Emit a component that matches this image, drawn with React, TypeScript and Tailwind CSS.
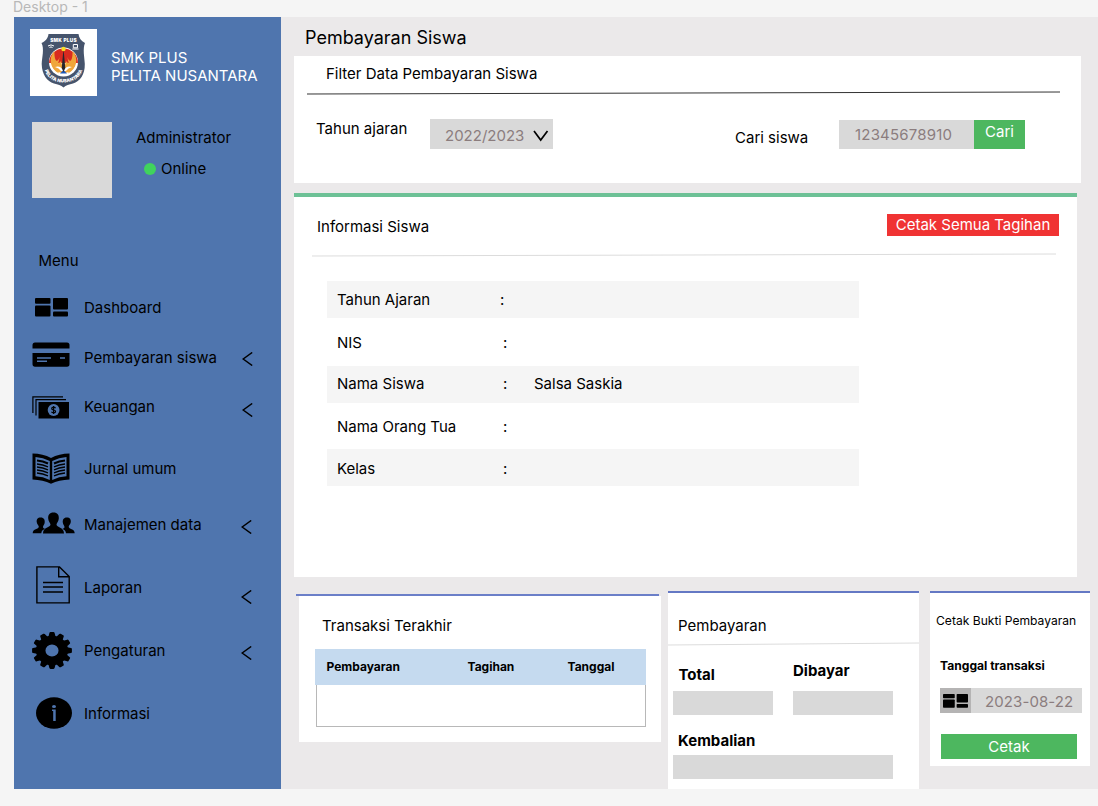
import type { ReactNode } from "react";

function Text({ className = "", children }: { className?: string; children: ReactNode }) {
  return <span className={`block shrink-0 whitespace-nowrap ${className}`}>{children}</span>;
}

function SchoolLogo() {
  return (
    <svg width="67" height="67" viewBox="0 0 67 67" className="shrink-0 bg-white">
      <path
        d="M18.500 5 H48.500 C49 9 51 12 55 14 C52.500 20 54.500 28 54.800 35 C55 46 50 52 43 54.500 C39 55.500 36 56 33.500 58.500 C31 56 28 55.500 24 54.500 C17 52 12 46 11.700 35 C12 28 14.500 20 11.500 14 C16 12 18 9 18.500 5 Z"
        fill="#46546c"
      />
      <circle cx="33.500" cy="33" r="14.500" fill="#fff" />
      <path d="M19 34 A14.500 14.500 0 0 1 48 34 Z" fill="#d92b20" />
      <path
        d="M24.500 22 C18 29 20 40 29 44.500 C25.500 38 29 34 29.500 28 C27.500 35 24 32 24.500 22 Z M42.500 22 C49 29 47 40 38 44.500 C41.500 38 38 34 37.500 28 C39.500 35 43 32 42.500 22 Z"
        fill="#f0a63a"
      />
      <path d="M22 31 C25 36 29 35 31 32 L33.500 42 L36 32 C38 35 42 36 45 31 C46 39 41 44 33.500 44 C26 44 21 39 22 31 Z" fill="#f0a63a" />
      <path d="M25 38 Q30 36 33.500 41 Q37 36 42 38 Q38 39 36 42 H31 Q29 39 25 38 Z" fill="#fff" />
      <path d="M30 44.500 L33.500 41 L37 44.500 Z" fill="#1d58b8" />
      <path d="M33.500 20 L35.300 39 L33.500 43 L31.700 39 Z" fill="#29262c" />
      <circle cx="33.500" cy="20" r="2.200" fill="#f7df25" />
      <g fill="none" stroke="#fff" strokeWidth="1">
        <path d="M18 17 Q21 14.800 24 17 M19.500 18.500 Q21 17.300 22.500 18.500" />
        <path d="M43.300 15.500 h4.200 v3.300 h-4.200 z M42.300 20 h6.200" />
      </g>
      <text x="33.500" y="13" textAnchor="middle" fill="#fff" fontSize="4.700" fontWeight="900" letterSpacing="0.300" fontFamily="Inter, sans-serif">
        SMK PLUS
      </text>
      <path id="motto" d="M14.500 40 C18 58 49 58 52.500 40" fill="none" />
      <text fill="#fff" fontSize="4.700" fontWeight="900" fontFamily="Inter, sans-serif">
        <textPath href="#motto" startOffset="50%" textAnchor="middle">
          PELITA NUSANTARA
        </textPath>
      </text>
    </svg>
  );
}

function DashboardIcon({ className = "" }: { className?: string }) {
  return (
    <svg viewBox="0 0 33 19" preserveAspectRatio="none" className={`shrink-0 ${className}`}>
      <rect x="0" y="0" width="15.500" height="5.700" rx="1" />
      <rect x="0" y="7.500" width="15.500" height="11" rx="1" />
      <rect x="18" y="0" width="15" height="11.500" rx="1" />
      <rect x="18" y="13.500" width="15" height="5" rx="1" />
    </svg>
  );
}

function CardIcon() {
  return (
    <svg width="38" height="25" viewBox="0 0 38 25" className="mt-[7px]">
      <path d="M3 0.500 H35 Q37.500 0.500 37.500 3 V6.500 H0.500 V3 Q0.500 0.500 3 0.500 Z" />
      <path d="M0.500 11 H37.500 V22 Q37.500 24.700 35 24.700 H3 Q0.500 24.700 0.500 22 Z" />
      <path d="M5 16 H19 M5 19.300 H15 M28 16 H33" stroke="#4f75ae" strokeWidth="1.400" />
    </svg>
  );
}

function MoneyIcon() {
  return (
    <svg width="38" height="23" viewBox="0 0 38 23" className="mt-[11px]">
      <path d="M0.900 17 V0.900 H31 M4 19.500 V3.700 H34" fill="none" stroke="#000" strokeWidth="1.200" />
      <rect x="6.500" y="6" width="30.500" height="16.500" />
      <circle cx="21.600" cy="14" r="5.900" fill="#4f75ae" />
      <path
        d="M23.500 12.200 Q23 11.200 21.600 11.200 Q19.700 11.200 19.700 12.500 Q19.700 13.700 21.600 14 Q23.600 14.300 23.600 15.600 Q23.600 16.900 21.600 16.900 Q20 16.900 19.500 15.800 M21.600 10 V18"
        fill="none"
        stroke="#000"
        strokeWidth="1.200"
      />
    </svg>
  );
}

function BookIcon() {
  return (
    <svg width="38" height="31" viewBox="0 0 38 31" className="mt-[8px]">
      <path d="M0.500 0.500 Q11 0.500 19 5 Q27 0.500 37.500 0.500 V26.500 Q27 27 19 30.800 Q11 27 0.500 26.500 Z" />
      <path d="M3.500 4 Q11 4.500 17.800 8 V27 Q11 23.500 3.500 23.300 Z M34.500 4 Q27 4.500 20.200 8 V27 Q27 23.500 34.500 23.300 Z" fill="#4f75ae" />
      <path d="M5 7.500 Q11 8 16 10.500 M33 7.500 Q27 8 22 10.500" fill="none" stroke="#000" strokeWidth="2" />
      <path
        d="M5 11 Q11 11.500 16 13.800 M5 14 Q11 14.500 16 16.800 M5 17 Q11 17.500 16 19.800 M5 20 Q11 20.500 16 22.800 M33 11 Q27 11.500 22 13.800 M33 14 Q27 14.500 22 16.800 M33 17 Q27 17.500 22 19.800 M33 20 Q27 20.500 22 22.800"
        fill="none"
        stroke="#000"
        strokeWidth="1.400"
      />
    </svg>
  );
}

function PeopleIcon() {
  return (
    <svg width="43" height="22" viewBox="0 0 43 22" className="mt-[12px]">
      <path d="M21.500 0.500 C25.500 0.500 27 3 26.800 6.500 C26.600 9.500 24.800 11 24.500 12.500 C24.500 15.500 32 15 32 21.500 H11 C11 15 18.500 15.500 18.500 12.500 C18.200 11 16.400 9.500 16.200 6.500 C16 3 17.500 0.500 21.500 0.500 Z" />
      <path d="M8.700 5.500 C12 5.500 13 8 12.700 10.500 C12.500 12.600 11 13.500 11 15 C11 16 12 16.500 13 16.800 C10.500 18 9.500 19 9.300 21.200 H0.700 C0.700 16.500 6.800 17.500 6.800 14.800 C6.800 13.500 4.900 12.500 4.700 10 C4.500 7.500 5.500 5.500 8.700 5.500 Z" />
      <path d="M34.800 5.500 C31.500 5.500 30.500 8 30.800 10.500 C31 12.600 32.500 13.500 32.500 15 C32.500 16 31.500 16.500 30.500 16.800 C32.500 18 33.800 19 34 21.200 H42.700 C42.700 16.500 36.700 17.500 36.700 14.800 C36.700 13.500 38.600 12.500 38.800 10 C39 7.500 38 5.500 34.800 5.500 Z" />
    </svg>
  );
}

function DocumentIcon() {
  return (
    <svg width="35" height="38" viewBox="0 0 35 38" className="ml-[4px] mt-[8px]" fill="none" stroke="#000" strokeWidth="1.400">
      <path d="M0.900 0.900 H23.500 L33.200 10.500 V36.900 H0.900 Z M22.700 0.900 V10.800 H33.200" />
      <path d="M7 16.500 H27 M7 21 H27 M7 26 H27" />
    </svg>
  );
}

const teeth = [0, 30, 60, 90, 120, 150, 180, 210, 240, 270, 300, 330];

function GearIcon() {
  return (
    <svg width="40" height="37" viewBox="-20 -20 40 40" preserveAspectRatio="none" className="mt-[8px]">
      <circle r="11.300" fill="none" stroke="#000" strokeWidth="9.500" />
      {teeth.map((angle) => (
        <path key={angle} d="M-3.800 -14 L-2.600 -19 Q-2.400 -19.900 -1.500 -19.900 H1.500 Q2.400 -19.900 2.600 -19 L3.800 -14 Z" transform={`rotate(${angle})`} />
      ))}
    </svg>
  );
}

function InfoIcon() {
  return (
    <svg width="36" height="32" viewBox="0 0 36 32" className="ml-[4px] mt-[11px]">
      <ellipse cx="18" cy="16" rx="18" ry="15.800" />
      <ellipse cx="18" cy="9.600" rx="2" ry="1.500" fill="#4f75ae" />
      <path d="M16 12.400 H19.700 V24 H17.200 V13.900 H16 Z" fill="#4f75ae" />
    </svg>
  );
}

function Chevron({ className = "" }: { className?: string }) {
  return (
    <svg width="11" height="14" viewBox="0 0 11 14" className={`shrink-0 ${className}`} fill="none" stroke="#000" strokeWidth="1.500">
      <path d="M10.200 0.500 L1.200 7 L10.200 13.500" />
    </svg>
  );
}

function MenuRow({ icon, label, row, text, chevron }: { icon: ReactNode; label: string; row: string; text: string; chevron?: string }) {
  return (
    <a className={`flex items-start pl-[18px] ${row}`}>
      <span className="block w-[52px] shrink-0">{icon}</span>
      <Text className={`w-[157px] ${text}`}>{label}</Text>
      {chevron && <Chevron className={chevron} />}
    </a>
  );
}

function Sidebar() {
  return (
    <aside className="h-[772px] w-[267px] shrink-0 bg-[#4f75ae]">
      <div className="flex h-[104px] items-start pl-[16px] pt-[12px]">
        <SchoolLogo />
        <Text className="ml-[14px] mt-[20px] text-white">
          SMK PLUS
          <br />
          PELITA NUSANTARA
        </Text>
      </div>
      <div className="flex h-[125px] items-start pl-[18px]">
        <div className="mt-px h-[76px] w-[80px] bg-[#d9d9d9]" />
        <div className="ml-[24px] mt-[8px]">
          <Text>Administrator</Text>
          <div className="mt-[13px] flex items-center pl-[8px]">
            <span className="size-[12px] rounded-full bg-[#40d35d]" />
            <Text className="ml-[5px]">Online</Text>
          </div>
        </div>
      </div>
      <Text className="h-[44px] pl-[24.500px] pt-[6px]">Menu</Text>
      <nav>
        <MenuRow icon={<DashboardIcon className="ml-[3px] mt-[8px] h-[19px] w-[33px]" />} label="Dashboard" row="h-[45px]" text="mt-[9px]" />
        <MenuRow icon={<CardIcon />} label="Pembayaran siswa" row="h-[50px]" text="mt-[14px]" chevron="ml-[1px] mt-[17px]" />
        <MenuRow icon={<MoneyIcon />} label="Keuangan" row="h-[60px]" text="mt-[13px]" chevron="ml-[1px] mt-[18px]" />
        <MenuRow icon={<BookIcon />} label="Jurnal umum" row="h-[55px]" text="mt-[15px]" />
        <MenuRow icon={<PeopleIcon />} label="Manajemen data" row="h-[58px]" text="mt-[16px]" chevron="mt-[20px]" />
        <MenuRow icon={<DocumentIcon />} label="Laporan" row="h-[66px]" text="mt-[21px]" chevron="mt-[32px]" />
        <MenuRow icon={<GearIcon />} label="Pengaturan" row="h-[62px]" text="mt-[18px]" chevron="mt-[22px]" />
        <MenuRow icon={<InfoIcon />} label="Informasi" row="h-[60px]" text="mt-[19px]" />
      </nav>
    </aside>
  );
}

function Rule({ width, className }: { width: number; className: string }) {
  return (
    <svg width={width} height="4" viewBox={`0 0 ${width} 4`} className={className} fill="none" stroke="currentColor">
      <path d={`M0 3 L${width} 1`} strokeWidth="1" />
    </svg>
  );
}

function FilterCard() {
  return (
    <section className="mt-[7px] ml-[13px] h-[127px] w-[787px] bg-white">
      <Text className="pl-[32px] pt-[9px]">Filter Data Pembayaran Siswa</Text>
      <Rule width={753} className="ml-[13px] mt-[8px] text-[#333]" />
      <div className="flex items-start">
        <Text className="ml-[22px] mt-[25px] w-[114px]">Tahun ajaran</Text>
        <div className="mt-[24px] flex h-[30px] w-[123px] items-start bg-[#d9d9d9] text-[#8b7d7e]">
          <Text className="ml-[15px] mt-[8px] w-[88px]">2022/2023</Text>
          <svg width="16" height="12" viewBox="0 0 16 12" className="mt-[11px]" fill="none" stroke="#000" strokeWidth="1.700">
            <path d="M1 1 L7.700 10 L14.500 1" />
          </svg>
        </div>
        <Text className="ml-[182px] mt-[34px] w-[104px]">Cari siswa</Text>
        <div className="mt-[25px] h-[29px] w-[135px] bg-[#d9d9d9] pl-[16px] pt-[6px] text-[#8b7d7e]">
          <Text className="tracking-[0.2px]">12345678910</Text>
        </div>
        <button className="mt-[25px] h-[29px] w-[51px] bg-[#4db75f] text-white">
          <Text className="-mt-[5px]">Cari</Text>
        </button>
      </div>
    </section>
  );
}

const studentFields = [
  { label: "Tahun Ajaran", value: "", row: "h-[37px] bg-[#f5f5f5] pt-[10px]", colon: "-ml-[3px] w-[37px]" },
  { label: "NIS", value: "", row: "h-[48px] pt-[16px]", colon: "w-[34px]" },
  { label: "Nama Siswa", value: "Salsa Saskia", row: "h-[37px] bg-[#f5f5f5] pt-[9px]", colon: "w-[31px]" },
  { label: "Nama Orang Tua", value: "", row: "h-[46px] pt-[15px]", colon: "w-[34px]" },
  { label: "Kelas", value: "", row: "h-[37px] bg-[#f5f5f5] pt-[11px]", colon: "w-[34px]" },
];

function StudentCard() {
  return (
    <section className="ml-[13px] mt-[10px] h-[384px] w-[783px] border-t-4 border-[#6dc196] bg-white">
      <div className="flex h-[56px] items-start">
        <Text className="ml-[23px] mt-[21px] w-[570px]">Informasi Siswa</Text>
        <button className="mt-[17px] flex h-[22px] w-[172px] items-center justify-center bg-[#f03333] text-white">
          <Text>Cetak Semua Tagihan</Text>
        </button>
      </div>
      <Rule width={744} className="ml-[18px] text-[#dcdcdc]" />
      <dl className="ml-[33px] mt-[24px] w-[532px]">
        {studentFields.map((field) => (
          <div key={field.label} className={`flex items-start ${field.row}`}>
            <dt className="ml-[10px] w-[166px] shrink-0">{field.label}</dt>
            <dd className={`shrink-0 ${field.colon}`}>:</dd>
            <dd>{field.value}</dd>
          </div>
        ))}
      </dl>
    </section>
  );
}

function LastTransactions() {
  return (
    <section className="ml-[15px] mt-[17px] w-[365px]">
      <div className="h-[2px] w-[363px] bg-[#6b7fc8]" />
      <div className="ml-[3px] h-[146px] w-[362px] bg-white">
        <Text className="pl-[23px] pt-[21px]">Transaksi Terakhir</Text>
        <div className="ml-[16px] mt-[14px] flex h-[36px] w-[331px] items-start bg-[#c5daef] pt-[10px] text-[12px] font-bold leading-[16px]">
          <Text className="ml-[11.500px] w-[141px]">Pembayaran</Text>
          <Text className="w-[100px]">Tagihan</Text>
          <Text>Tanggal</Text>
        </div>
        <div className="ml-[17px] h-[42px] w-[330px] border border-t-0 border-[#b8b8b8]" />
      </div>
    </section>
  );
}

function PaymentCard() {
  return (
    <section className="ml-[7px] mt-[14px] h-[198px] w-[251px] border-t-2 border-[#6478c4] bg-white">
      <Text className="pl-[10px] pt-[24px]">Pembayaran</Text>
      <Rule width={251} className="mt-[7px] text-[#dcdcdc]" />
      <div className="flex h-[52px] items-start font-bold">
        <div className="ml-[5px] w-[120px]">
          <Text className="h-[45px] pl-[5.500px] pt-[20px]">Total</Text>
          <div className="h-[24px] w-[100px] bg-[#d9d9d9]" />
        </div>
        <div>
          <Text className="h-[45px] pt-[16px]">Dibayar</Text>
          <div className="h-[24px] w-[100px] bg-[#d9d9d9]" />
        </div>
      </div>
      <Text className="pl-[10px] pt-[34px] font-bold">Kembalian</Text>
      <div className="ml-[5px] mt-[5px] h-[24px] w-[220px] bg-[#d9d9d9]" />
    </section>
  );
}

function ReceiptCard() {
  return (
    <section className="ml-[11px] mt-[14px] h-[175px] w-[160px] border-t-2 border-[#6478c4] bg-white">
      <Text className="pl-[6px] pt-[20px] text-[12.100px] leading-[16px]">Cetak Bukti Pembayaran</Text>
      <Text className="pl-[10px] pt-[29px] text-[12.100px] font-bold leading-[16px]">Tanggal transaksi</Text>
      <div className="ml-[10px] mt-[14px] flex h-[25px] w-[142px] items-start bg-[#d9d9d9]">
        <div className="h-full w-[31px] bg-[#b5b4b4] pl-[3px] pt-[6px]">
          <DashboardIcon className="h-[14px] w-[25px]" />
        </div>
        <Text className="ml-[14px] mt-[5px] tracking-[0.1px] text-[#8b7d7e]">2023-08-22</Text>
      </div>
      <button className="ml-[11px] mt-[21px] flex h-[25px] w-[136px] items-center justify-center bg-[#4db75f] text-white">
        <Text>Cetak</Text>
      </button>
    </section>
  );
}

export default function App() {
  return (
    <div className="flex h-[806px] w-[1098px] flex-col overflow-hidden bg-[#f5f5f5] pl-[14px] font-['Inter',sans-serif] text-[15px] leading-[18px] text-black">
      <div className="h-[17px] shrink-0">
        <Text className="-ml-px text-[14px] leading-[14px] text-[#b8b8b8]">Desktop - 1</Text>
      </div>
      <div className="flex h-[772px] shrink-0">
        <Sidebar />
        <main className="h-[772px] w-[817px] shrink-0 bg-[#ebe9ea]">
          <Text className="pl-[24px] pt-[10px] text-[18px] leading-[22px]">Pembayaran Siswa</Text>
          <FilterCard />
          <StudentCard />
          <div className="flex items-start">
            <LastTransactions />
            <PaymentCard />
            <ReceiptCard />
          </div>
        </main>
      </div>
    </div>
  );
}
